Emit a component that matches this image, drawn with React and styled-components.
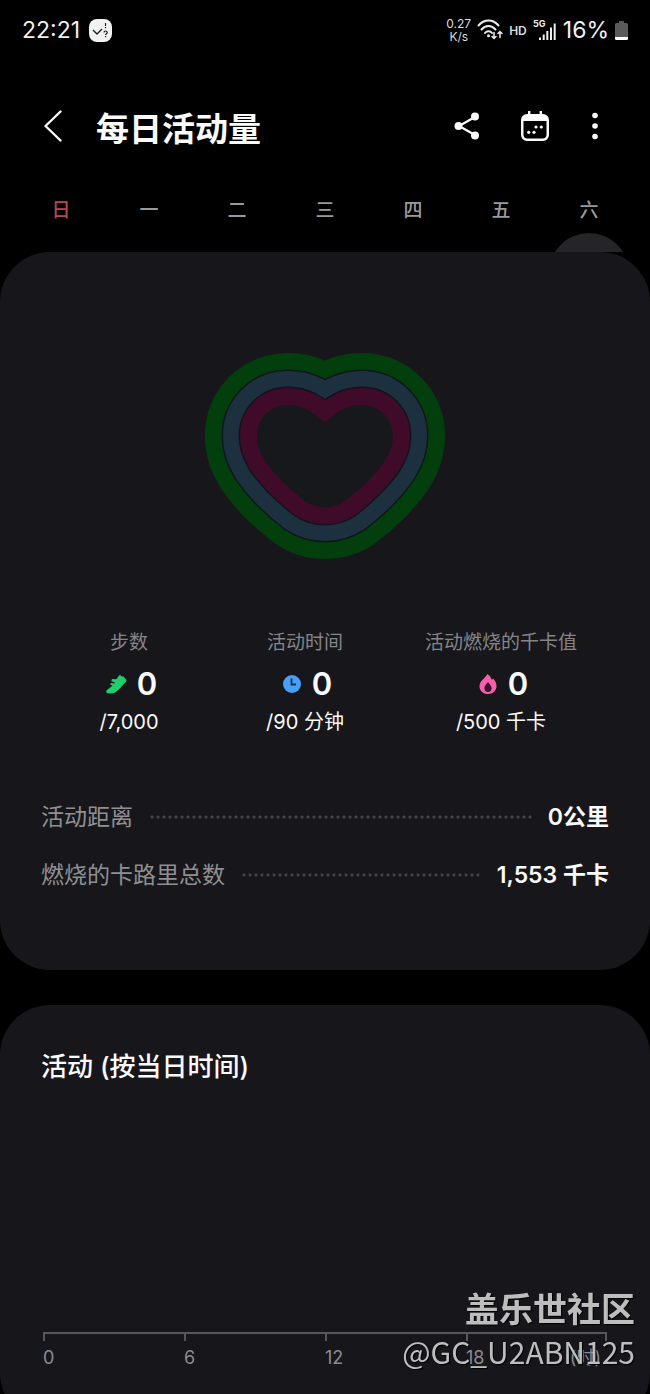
import React from 'react'
import styled, { createGlobalStyle } from 'styled-components'

const GlobalStyle = createGlobalStyle`
* {
    box-sizing: border-box;
}

body {
    margin: 0;
    background: #000;
    color: #fafafa;
    font-family: Inter, 'Noto Sans CJK SC', sans-serif;
}

h1, h2, p, dl, dt, dd {
    margin: 0;
}
`

const Screen = styled.div`
height: 100vh;
overflow: hidden;
background: #000;
`

const StatusBar = styled.div`
display: flex;
justify-content: space-between;
align-items: center;
height: 60px;
padding: 0 22px;
`

const StatusGroup = styled.div`
display: flex;
align-items: center;
gap: ${({ gap }) => gap};
`

const StatusText = styled.span`
font-size: 23px;
line-height: 28px;
color: #f0f0f0;
`

const NetSpeed = styled.span`
font-size: 12px;
line-height: 13px;
text-align: center;
color: #ddd;
`

const HdMark = styled.span`
font-size: 12px;
font-weight: 600;
color: #ddd;
`

const Header = styled.header`
display: flex;
align-items: center;
height: 72px;
margin-top: 30px;
padding: 0 35px;
`

const IconButton = styled.button`
display: flex;
justify-content: center;
align-items: center;
width: ${({ narrow }) => narrow ? '20px' : '36px'};
height: 44px;
padding: 0;
border: 0;
background: none;
color: #fafafa;
`

const Title = styled.h1`
flex: 1;
margin-left: 25px;
padding-top: 6px;
font-size: 33px;
line-height: 48px;
font-weight: 600;
`

const Actions = styled.div`
display: flex;
align-items: center;
gap: 32px;
margin-right: 10px;
`

const Week = styled.div`
display: grid;
grid-template-columns: repeat(7, 1fr);
margin-top: 34px;
padding: 0 17px;
`

const Day = styled.div`
display: flex;
flex-direction: column;
align-items: center;
height: 56px;
font-size: 19px;
line-height: 30px;
font-weight: 500;
color: ${({ sunday }) => sunday ? '#b5494d' : '#9a9a9a'};
`

const DayMarker = styled.div`
width: 80px;
height: 19px;
margin-top: 7px;
overflow: hidden;

&::before {
    content: '';
    display: block;
    height: 80px;
    border-radius: 50%;
    background: #252528;
}
`

const Card = styled.section`
padding: ${({ padding }) => padding};
border-radius: 50px;
background: #17171b;

& + & {
    margin-top: 35px;
}
`

const HeartSvg = styled.svg`
display: block;
margin: 0 auto;
`

const Stats = styled.div`
display: grid;
grid-template-columns: 176px 176px 216px;
justify-content: center;
margin-top: 68px;
`

const Stat = styled.div`
display: flex;
flex-direction: column;
align-items: center;
`

const StatLabel = styled.p`
font-size: 19px;
line-height: 30px;
color: #858588;
`

const StatValue = styled.div`
display: flex;
align-items: center;
gap: 10px;
margin-top: 6px;
padding-left: 4px;
font-size: 31px;
line-height: 40px;
font-weight: 600;
`

const StatGoal = styled.p`
margin-top: 2px;
font-size: 20px;
line-height: 32px;
`

const Totals = styled.dl`
margin-top: 50px;
`

const TotalRow = styled.div`
display: flex;
align-items: center;
height: 58px;
font-size: 23px;
line-height: 34px;

dt {
    color: #8f8f92;
}

dd {
    font-weight: 600;
}
`

const Dots = styled.span`
flex: 1;
height: 6px;
margin: 0 16px;
background: radial-gradient(circle, #46464a 1px, transparent 2px) 0 0 / 6px 6px;
`

const CardTitle = styled.h2`
font-size: 26px;
line-height: 40px;
font-weight: 500;
`

const Axis = styled.div`
display: grid;
grid-template-columns: repeat(4, 1fr);
margin: 245px 2px 0;
border-top: 2px solid #57575a;
font-size: 18px;
line-height: 22px;
color: #8b8b8e;
`

const AxisCell = styled.div`
display: flex;
justify-content: space-between;
padding: 13px 6px 0 0;
background:
    linear-gradient(#57575a, #57575a) left top / 2px 7px no-repeat,
    linear-gradient(#57575a, #57575a) right top / ${({ last }) => last ? '2px 7px' : '0 0'} no-repeat;
`

const Watermark = styled.div`
position: fixed;
right: 15px;
bottom: 22px;
font-family: 'Noto Sans CJK SC', sans-serif;
color: rgba(215, 215, 215, 0.88);
text-align: right;
text-shadow: 1px 1px 1px #000;
`

const WatermarkName = styled.div`
font-size: 34px;
line-height: 44px;
font-weight: 700;
`

const WatermarkUser = styled.div`
font-size: 30px;
line-height: 42px;
`

const HEART = 'M120 70C112 65 103 53 83 53C65 53 52 67 52 84C52 103 66 117 76 128C85 137 92 143 100 149C106 153 113 155 120 155C127 155 134 153 140 149C148 143 155 137 164 128C174 117 188 103 188 84C188 67 175 53 157 53C137 53 128 65 120 70Z'

const rings = [
    { color: '#033f0d', width: 104 },
    { color: '#10171b', width: 71 },
    { color: '#1d3040', width: 68 },
    { color: '#14131a', width: 37 },
    { color: '#400b29', width: 34 },
]

const Heart = () => (
    <HeartSvg width="240" height="208" viewBox="0 0 240 208">
        {rings.map(({ color, width }) => (
            <path key={color} d={HEART} fill="none" stroke={color} strokeWidth={width} strokeLinejoin="round" />
        ))}
        <path d={HEART} fill="#17181b" />
    </HeartSvg>
)

const AppBadge = () => (
    <svg width="23" height="23" viewBox="0 0 23 23">
        <rect width="23" height="23" rx="8" fill="#f2f2f2" />
        <path d="M4 11l4 4 5-5" fill="none" stroke="#222" strokeWidth="1.4" />
        <path d="M16.500 4v3M16.500 8v1.200M15 13.500c0-2 3.200-2 3.200 0 0 1.300-1.600 1.200-1.600 2.500M16.600 17v1.200" fill="none" stroke="#222" strokeWidth="1.200" />
    </svg>
)

const WifiIcon = () => (
    <svg width="26" height="22" viewBox="0 0 26 22" fill="none" stroke="#eee" strokeWidth="2" strokeLinecap="round">
        <path d="M1.500 6.500C7-.3 16-.3 21.500 6.500M4.500 10.500c4-4.800 10-4.800 14 0M8 14c2-2.500 5-2.500 7 0" />
        <circle cx="11.500" cy="16.800" r="1.500" fill="#eee" stroke="none" />
        <path d="M17 13.500v6M15 17.500l2 2 2-2M23 18.500v-6M21 14.500l2-2 2 2" strokeWidth="1.500" />
    </svg>
)

const SignalIcon = () => (
    <svg width="24" height="22" viewBox="0 0 24 22" fill="#eee">
        <text x="0" y="8" fontSize="9" fontWeight="700" fontFamily="Inter, sans-serif">5G</text>
        <path d="M6 18.500h2V21H6zM9.700 15.500h2V21h-2zM13.300 12h2v9h-2zM17 8.500h2V21h-2zM20.700 4.500h2V21h-2z" />
    </svg>
)

const BatteryIcon = () => (
    <svg width="13" height="19" viewBox="0 0 13 19">
        <path d="M4 0h5v2h2.500A1.500 1.500 0 0 1 13 3.500v14a1.500 1.500 0 0 1-1.500 1.500h-10A1.500 1.500 0 0 1 0 17.500v-14A1.500 1.500 0 0 1 1.500 2H4z" fill="#5a5a5a" />
        <path d="M0 16h13v1.500a1.500 1.500 0 0 1-1.500 1.500h-10A1.500 1.500 0 0 1 0 17.500z" fill="#fff" />
    </svg>
)

const BackIcon = () => (
    <svg width="18" height="32" viewBox="0 0 18 32" fill="none" stroke="currentColor" strokeWidth="2.400" strokeLinecap="round" strokeLinejoin="round">
        <path d="M16.500 1.500L1.500 16l15 14.500" />
    </svg>
)

const ShareIcon = () => (
    <svg width="26" height="28" viewBox="0 0 26 28" fill="currentColor">
        <path d="M21 5L5 14l16 9" fill="none" stroke="currentColor" strokeWidth="2.200" />
        <circle cx="21" cy="4.500" r="4" />
        <circle cx="4.500" cy="14" r="4" />
        <circle cx="21" cy="23.500" r="4" />
    </svg>
)

const CalendarIcon = () => (
    <svg width="28" height="30" viewBox="0 0 28 30" fill="currentColor">
        <path d="M7 0h2.400v4H7zM18.600 0H21v4h-2.400z" />
        <path fillRule="evenodd" d="M6 3h16a6 6 0 0 1 6 6v15a6 6 0 0 1-6 6H6a6 6 0 0 1-6-6V9a6 6 0 0 1 6-6zM2.500 10v13.500a4 4 0 0 0 4 4h15a4 4 0 0 0 4-4V10z" />
        <circle cx="15" cy="16" r="1.600" />
        <circle cx="20.300" cy="16" r="1.600" />
        <circle cx="7.700" cy="21.300" r="1.600" />
        <circle cx="13" cy="21.300" r="1.600" />
    </svg>
)

const MoreIcon = () => (
    <svg width="6" height="28" viewBox="0 0 6 28" fill="currentColor">
        <circle cx="3" cy="3.500" r="2.800" />
        <circle cx="3" cy="14" r="2.800" />
        <circle cx="3" cy="24.500" r="2.800" />
    </svg>
)

const ShoeIcon = () => (
    <svg width="22" height="22" viewBox="0 0 22 22">
        <path d="M15 1.500C15.500 3 17 3.800 18.500 3.500L21.300 6.800C21.700 7.600 21.300 8.300 20.700 9C17 13 13.500 17.500 9.500 19.800C7.500 20.800 4 20.800 2 20C.7 19.300 1 17.800 2 17L7.500 12.800L5.200 11.600L5.800 10L9.400 10.500L10 9.500L6.300 8.300L7 6L11.300 6.300Z" fill="#1fce6d" />
    </svg>
)

const ClockIcon = () => (
    <svg width="20" height="20" viewBox="0 0 20 20">
        <circle cx="10" cy="10" r="9" fill="#479ff8" />
        <path d="M9.500 4.500v6H14" fill="none" stroke="#17304e" strokeWidth="1.800" />
    </svg>
)

const FlameIcon = () => (
    <svg width="20" height="22" viewBox="0 0 20 22">
        <path d="M9.500 1c2 1.500 3.600 3.500 4.200 5.700.7-.3 1.100-.7 1.500-1.300 2 2.200 3.300 4.800 3.300 7.600 0 4.700-3.700 8-8.500 8s-8.500-3.300-8.500-7.800C1.500 8 6.500 6 9.500 1z" fill="#f75fa8" />
        <path d="M10 9c2 2.300 3.600 4 3.600 6.200A3.600 3.600 0 0 1 10 19a3.600 3.600 0 0 1-3.600-3.800C6.400 13 8 11.300 10 9z" fill="#3a1030" />
    </svg>
)

const days = ['日', '一', '二', '三', '四', '五', '六']

const stats = [
    { label: '步数', icon: <ShoeIcon />, value: '0', goal: '/7,000' },
    { label: '活动时间', icon: <ClockIcon />, value: '0', goal: '/90 分钟' },
    { label: '活动燃烧的千卡值', icon: <FlameIcon />, value: '0', goal: '/500 千卡' },
]

const totals = [
    { label: '活动距离', value: '0公里' },
    { label: '燃烧的卡路里总数', value: '1,553 千卡' },
]

const hours = ['0', '6', '12', '18']

const App = () => {
    return (
        <Screen>
            <GlobalStyle />
            <StatusBar>
                <StatusGroup gap="9px">
                    <StatusText>22:21</StatusText>
                    <AppBadge />
                </StatusGroup>
                <StatusGroup gap="6px">
                    <NetSpeed>0.27<br />K/s</NetSpeed>
                    <WifiIcon />
                    <HdMark>HD</HdMark>
                    <SignalIcon />
                    <StatusText>16%</StatusText>
                    <BatteryIcon />
                </StatusGroup>
            </StatusBar>
            <Header>
                <IconButton aria-label="返回"><BackIcon /></IconButton>
                <Title>每日活动量</Title>
                <Actions>
                    <IconButton aria-label="分享"><ShareIcon /></IconButton>
                    <IconButton aria-label="日历"><CalendarIcon /></IconButton>
                    <IconButton aria-label="更多" narrow="true"><MoreIcon /></IconButton>
                </Actions>
            </Header>
            <Week>
                {days.map((day, i) => (
                    <Day key={day} sunday={i === 0 ? 1 : undefined}>
                        {day}
                        {i === 6 && <DayMarker />}
                    </Day>
                ))}
            </Week>
            <Card padding="100px 41px 66px">
                <Heart />
                <Stats>
                    {stats.map(({ label, icon, value, goal }) => (
                        <Stat key={label}>
                            <StatLabel>{label}</StatLabel>
                            <StatValue>{icon}{value}</StatValue>
                            <StatGoal>{goal}</StatGoal>
                        </Stat>
                    ))}
                </Stats>
                <Totals>
                    {totals.map(({ label, value }) => (
                        <TotalRow key={label}>
                            <dt>{label}</dt>
                            <Dots />
                            <dd>{value}</dd>
                        </TotalRow>
                    ))}
                </Totals>
            </Card>
            <Card padding="42px 41px 54px">
                <CardTitle>活动 (按当日时间)</CardTitle>
                <Axis>
                    {hours.map((hour, i) => (
                        <AxisCell key={hour} last={i === 3 ? 1 : undefined}>
                            <span>{hour}</span>
                            {i === 3 && <span>(时)</span>}
                        </AxisCell>
                    ))}
                </Axis>
            </Card>
            <Watermark>
                <WatermarkName>盖乐世社区</WatermarkName>
                <WatermarkUser>@GC_U2ABN125</WatermarkUser>
            </Watermark>
        </Screen>
    )
}

export default App
